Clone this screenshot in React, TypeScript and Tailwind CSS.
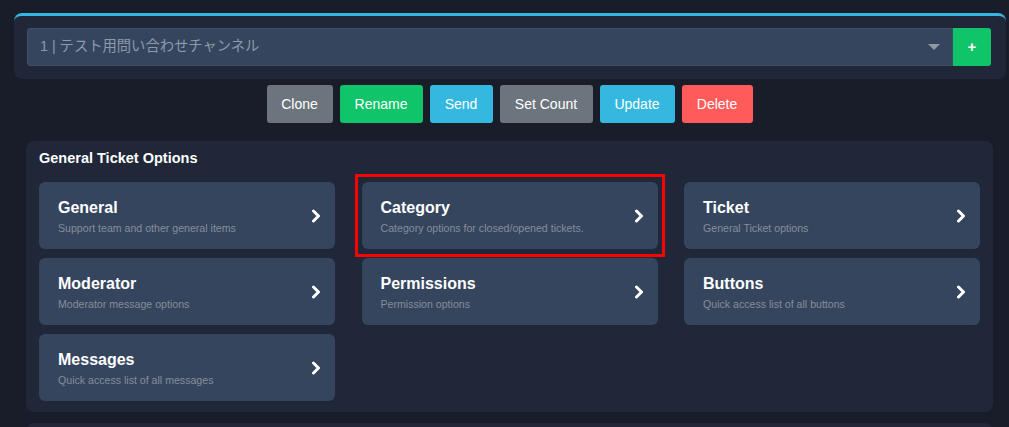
const buttons = [
  { label: 'Clone', cls: 'bg-[#6c757d] w-[66px]' },
  { label: 'Rename', cls: 'bg-[#10c469] w-[83px]' },
  { label: 'Send', cls: 'bg-[#35b8e0] w-[63px]' },
  { label: 'Set Count', cls: 'bg-[#6c757d] w-[93px]' },
  { label: 'Update', cls: 'bg-[#35b8e0] w-[75px]' },
  { label: 'Delete', cls: 'bg-[#ff5b5b] w-[71px]' },
]

const options = [
  { title: 'General', desc: 'Support team and other general items' },
  { title: 'Category', desc: 'Category options for closed/opened tickets.', highlight: true },
  { title: 'Ticket', desc: 'General Ticket options' },
  { title: 'Moderator', desc: 'Moderator message options' },
  { title: 'Permissions', desc: 'Permission options' },
  { title: 'Buttons', desc: 'Quick access list of all buttons' },
  { title: 'Messages', desc: 'Quick access list of all messages' },
]

function Chevron() {
  return (
    <svg width="10" height="14" viewBox="0 0 10 14" className="text-white">
      <polyline points="2.5,2 7.5,7 2.5,12" fill="none" stroke="currentColor" strokeWidth="3" strokeLinecap="round" strokeLinejoin="round" />
    </svg>
  )
}

export default function App() {
  return (
    <div className="h-[427px] overflow-hidden bg-[#181d29] pt-[13px] font-['Liberation_Sans','Noto_Sans_CJK_JP',sans-serif]">
      <div className="ml-[14px] w-[992px] rounded-lg border-t-[3px] border-[#35b8e0] bg-[#1f2738] pl-[13px] pr-[15px] pt-[12px] pb-[13px]">
        <div className="flex h-[38px]">
          <div className="flex flex-1 items-center justify-between rounded-l-[3px] border border-[#3e4f67] bg-[#35455e] pl-[12px] pr-[12px]">
            <span className="text-[14.3px] text-[#8c9aab]">1 | テスト用問い合わせチャンネル</span>
            <span className="h-0 w-0 border-x-[6px] border-t-[6px] border-x-transparent border-t-[#8f98a3]" />
          </div>
          <button className="w-[38px] rounded-r-[3px] bg-[#10c469] text-[15px] font-bold text-white">+</button>
        </div>
      </div>

      <div className="mt-[6px] flex justify-center gap-[7px] pl-[10px]">
        {buttons.map((b) => (
          <button key={b.label} className={`h-[38px] rounded-[3px] text-[14px] text-white ${b.cls}`}>
            {b.label}
          </button>
        ))}
      </div>

      <div className="ml-[26px] mt-[18px] w-[967px] rounded-lg bg-[#1f2738] px-[13px] pt-[9px] pb-[11px]">
        <h2 className="mb-[15px] text-[14.5px] font-bold leading-[17px] text-white">General Ticket Options</h2>
        <div className="grid grid-cols-[296px_296px_296px] justify-between gap-y-[9px]">
          {options.map((o) => (
            <div key={o.title} className="relative">
              {o.highlight && (
                <div className="pointer-events-none absolute -inset-x-[7px] -inset-y-[8px] border-[3px] border-[#ff0000]" />
              )}
              <div className="flex h-[67px] items-center justify-between rounded-md bg-[#35455e] pl-[19px] pr-[14px]">
                <div className="mt-[2px]">
                  <div className="text-[16px] font-bold leading-[20px] text-white">{o.title}</div>
                  <div className="mt-[3px] text-[10.6px] leading-[14px] text-[#858d99]">{o.desc}</div>
                </div>
                <Chevron />
              </div>
            </div>
          ))}
        </div>
      </div>

      <div className="ml-[26px] mt-[11px] h-[20px] w-[967px] rounded-lg bg-[#1f2738]" />
    </div>
  )
}
